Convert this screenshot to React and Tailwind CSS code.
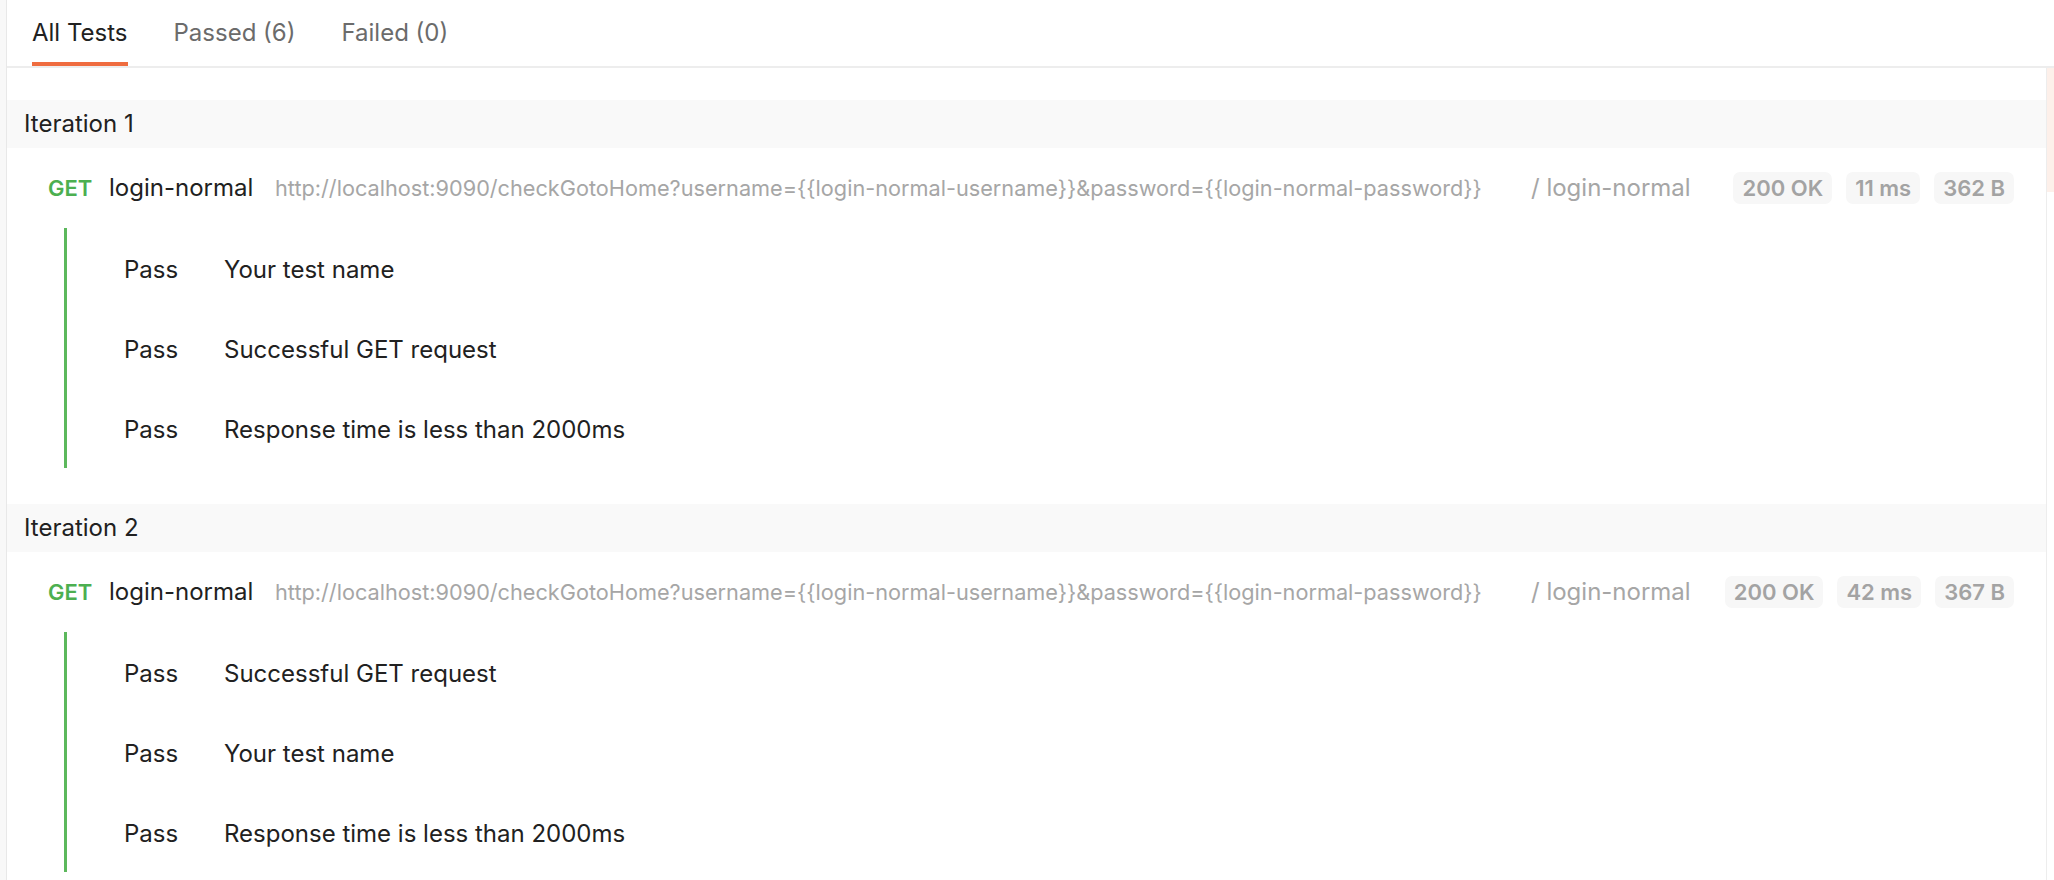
import React, { useState } from 'react';

const iterations = [
  {
    label: 'Iteration 1',
    status: '200 OK',
    time: '11 ms',
    size: '362 B',
    tests: ['Your test name', 'Successful GET request', 'Response time is less than 2000ms'],
  },
  {
    label: 'Iteration 2',
    status: '200 OK',
    time: '42 ms',
    size: '367 B',
    tests: ['Successful GET request', 'Your test name', 'Response time is less than 2000ms'],
  },
];

const url =
  'http://localhost:9090/checkGotoHome?username={{login-normal-username}}&password={{login-normal-password}}';

const Badge = ({ children }) => (
  <span className="h-[32px] px-[9px] flex items-center rounded-[7px] bg-[#f7f7f7] text-[#a3a3a3] text-[22px] font-semibold">
    {children}
  </span>
);

const IterationBlock = ({ iteration }) => (
  <div className="mb-[36px]">
    <div className="h-[48px] flex items-center pl-[17px] bg-[#f9f9f9] text-[24px] text-[#212121]">
      {iteration.label}
    </div>
    <div className="h-[80px] flex items-center pl-[41px] pr-[32px] text-[24px]">
      <span className="w-[61px] shrink-0 text-[#4caf50] font-semibold text-[22px]">GET</span>
      <span className="w-[166px] shrink-0 text-[#212121]">login-normal</span>
      <span className="w-[1256px] shrink-0 text-[#a6a6a6] text-[21.7px] whitespace-nowrap">{url}</span>
      <span className="text-[#a6a6a6] whitespace-nowrap">/ login-normal</span>
      <div className="flex-1" />
      <div className="flex items-center gap-[14px]">
        <Badge>{iteration.status}</Badge>
        <Badge>{iteration.time}</Badge>
        <Badge>{iteration.size}</Badge>
      </div>
    </div>
    <div className="ml-[57px] border-l-[3px] border-[#5cb85c]">
      {iteration.tests.map((test, i) => (
        <div key={i} className="h-[80px] flex items-center pt-[4px] pl-[57px] text-[24px] text-[#212121]">
          <span className="w-[100px]">Pass</span>
          <span>{test}</span>
        </div>
      ))}
    </div>
  </div>
);

export default function App() {
  const [activeTab, setActiveTab] = useState('all');
  const tabs = [
    { id: 'all', label: 'All Tests' },
    { id: 'passed', label: 'Passed (6)' },
    { id: 'failed', label: 'Failed (0)' },
  ];

  return (
    <div className="w-[2054px] h-[880px] overflow-hidden flex bg-white font-['Inter',sans-serif]">
      <div className="w-[7px] shrink-0 bg-[#f8f8f8] border-r border-[#e8e8e8]" />
      <div className="flex-1 flex flex-col min-w-0">
        <div className="h-[68px] shrink-0 flex items-end gap-[46px] pl-[25px] border-b-2 border-[#ededed]">
          {tabs.map(tab => (
            <button
              key={tab.id}
              onClick={() => setActiveTab(tab.id)}
              className={`h-full flex items-center border-b-4 pt-[4px] text-[24px] ${
                activeTab === tab.id ? 'border-[#ef6c3f] text-[#212121]' : 'border-transparent text-[#6b6b6b]'
              }`}
            >
              {tab.label}
            </button>
          ))}
        </div>
        <div className="flex-1 flex min-h-0">
          <div className="flex-1 pt-[32px] min-w-0">
            {iterations.map(it => (
              <IterationBlock key={it.label} iteration={it} />
            ))}
          </div>
          <div className="w-[8px] shrink-0 border-l border-[#ededed]">
            <div className="h-[124px] bg-[#fdf0ea]" />
          </div>
        </div>
      </div>
    </div>
  );
}
